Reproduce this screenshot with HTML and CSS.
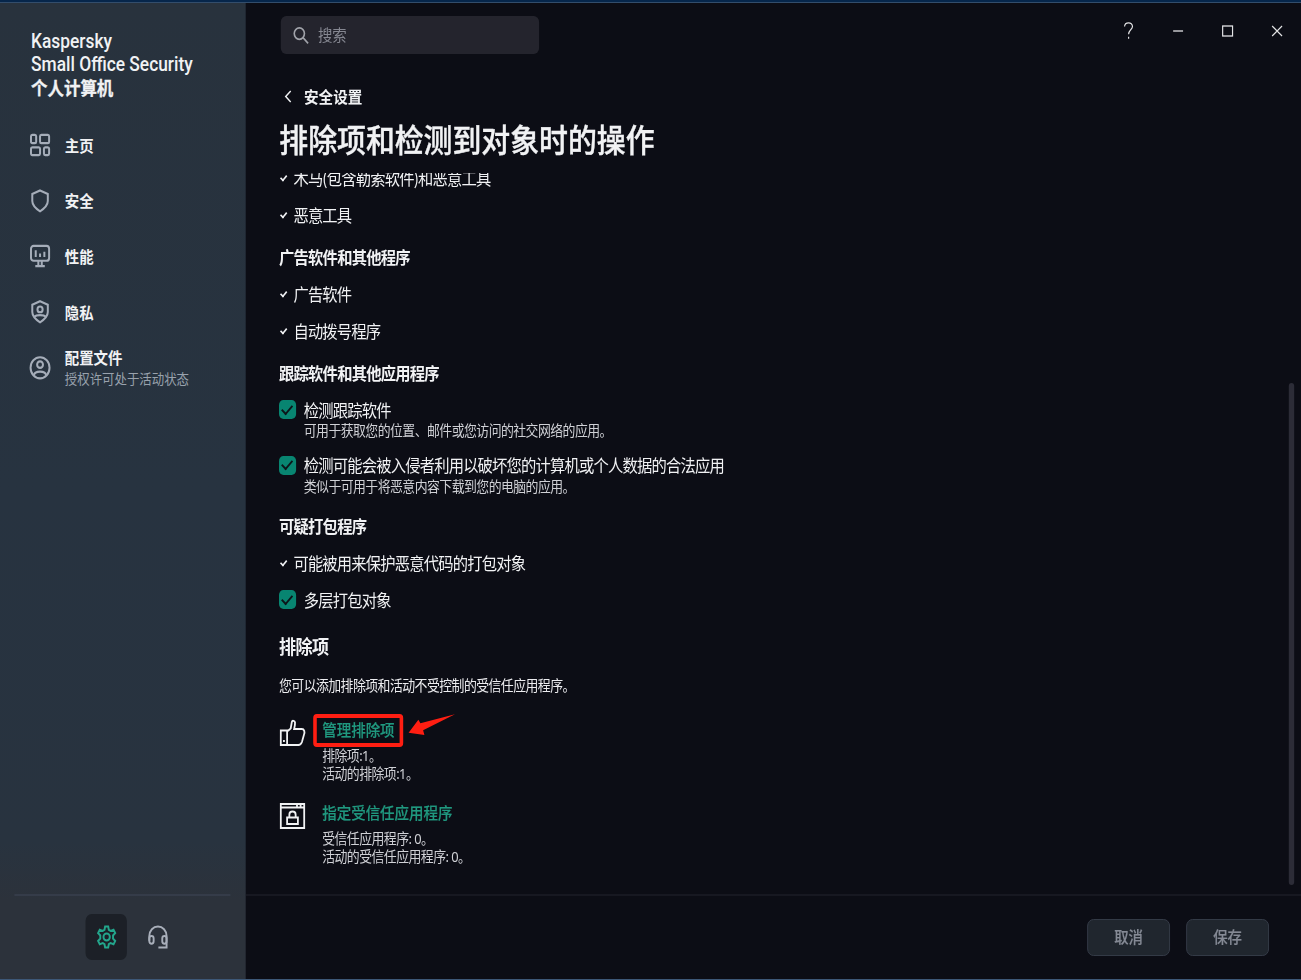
FILE: index.html
```
<!DOCTYPE html>
<html lang="zh-CN">
<head>
  <meta charset="UTF-8" />
  <meta name="viewport" content="width=device-width, initial-scale=1.0"/>
  <title>Kaspersky Small Office Security</title>
  <link rel="stylesheet" href="styles.css">
</head>
<body>

  <div class="screen">
  <div class="window">
    <aside class="sidebar">
      <div class="brand">Kaspersky<br>Small Office Security<br><b>个人计算机</b></div>

      <nav class="nav">
        <a class="nav-item">
          <svg class="nav-icon" viewBox="0 0 24 24"><rect x="1.500" y="2" width="6" height="8.500" rx="1.5"/><rect x="12" y="2" width="10.500" height="8.500" rx="1.5"/><rect x="1.500" y="15" width="10.500" height="8" rx="1.5"/><rect x="16.500" y="15" width="6" height="8" rx="1.5"/></svg>
          <span>主页</span>
        </a>
        <a class="nav-item">
          <svg class="nav-icon" viewBox="0 0 24 24"><path d="M12 1.500l9 3.700v7.300c0 4.200-4 7.800-9 10.800-5-3-9-6.600-9-10.800V5.200z"/></svg>
          <span>安全</span>
        </a>
        <a class="nav-item">
          <svg class="nav-icon" viewBox="0 0 24 24"><rect x="1.500" y="2" width="21" height="15.500" rx="3"/><path d="M7 6.500v7M12 10v3.500M17 8v5.500M10 17v5M14 17v5M6.500 23h11"/></svg>
          <span>性能</span>
        </a>
        <a class="nav-item">
          <svg class="nav-icon" viewBox="0 0 24 24"><path d="M12 1.300l9 3.700v7.500c0 4.200-4 7.800-9 10.800-5-3-9-6.600-9-10.800V5z"/><circle cx="12" cy="9.800" r="3"/><path d="M5.500 17.500c2-2.400 11-2.400 13 0"/></svg>
          <span>隐私</span>
        </a>
        <a class="nav-item">
          <svg class="nav-icon" viewBox="0 0 24 24"><circle cx="12" cy="12.300" r="11"/><circle cx="12" cy="9" r="3.400"/><path d="M5 20c.5-5 13.500-5 14 0"/></svg>
          <span>配置文件<small>授权许可处于活动状态</small></span>
        </a>
      </nav>

      <div class="sidebar-footer">
        <button class="tool active" aria-label="设置">
          <svg viewBox="0 0 24 24"><path d="M10.200 1h3.600l.7 3.500 2 1.200 3.500-1.200 1.900 3.400-2.500 2.500v3.200l2.500 2.500-1.900 3.400-3.500-1.200-2 1.200-.7 3.500h-3.600l-.7-3.500-2-1.200L4 19.500l-1.900-3.400 2.500-2.500v-3.200L2.100 7.900 4 4.500l3.500 1.200 2-1.200z"/><circle cx="12" cy="12" r="3.700"/></svg>
        </button>
        <button class="tool" aria-label="支持">
          <svg viewBox="0 0 24 24"><path d="M2 16v-5a10 10 0 0 1 20 0V23h-9.500"/><rect x="2" y="11" width="5" height="8" rx="2.500"/><rect x="17" y="11" width="5" height="8" rx="2.500"/></svg>
        </button>
      </div>
    </aside>

    <main class="main">
      <header class="topbar">
        <div class="search">
          <svg viewBox="0 0 18 18"><circle cx="7" cy="7" r="6"/><path d="M11.300 11.300l6 6"/></svg>
          <span>搜索</span>
        </div>
        <div class="window-controls">
          <svg viewBox="0 0 18 18"><path d="M4.500 4.500C4.800-.4 13.300-.4 13.300 4.400c0 3.300-4.300 3.600-4.300 7.900M9 14.800v2"/></svg>
          <svg viewBox="0 0 18 18"><path d="M3.500 9h11"/></svg>
          <svg viewBox="0 0 18 18"><rect x="3.500" y="4" width="11" height="10"/></svg>
          <svg viewBox="0 0 18 18"><path d="M3.500 4l11 10M14.500 4l-11 10"/></svg>
        </div>
      </header>

      <a class="back">
        <svg viewBox="0 0 8 12"><path d="M7 1L1.500 6.500l5.500 5.500"/></svg>
        <span>安全设置</span>
      </a>
      <h1>排除项和检测到对象时的操作</h1>

      <section class="content">
        <div class="item first"><i class="tick"></i>木马(包含勒索软件)和恶意工具</div>
        <div class="item"><i class="tick"></i>恶意工具</div>

        <h3>广告软件和其他程序</h3>
        <div class="item"><i class="tick"></i>广告软件</div>
        <div class="item"><i class="tick"></i>自动拨号程序</div>

        <h3>跟踪软件和其他应用程序</h3>
        <div class="item"><i class="checkbox"></i>检测跟踪软件</div>
        <p class="hint">可用于获取您的位置、邮件或您访问的社交网络的应用。</p>
        <div class="item">
          <i class="checkbox"></i>检测可能会被入侵者利用以破坏您的计算机或个人数据的合法应用
        </div>
        <p class="hint">类似于可用于将恶意内容下载到您的电脑的应用。</p>

        <h3>可疑打包程序</h3>
        <div class="item"><i class="tick"></i>可能被用来保护恶意代码的打包对象</div>
        <div class="item"><i class="checkbox"></i>多层打包对象</div>

        <h2>排除项</h2>
        <p class="lead">您可以添加排除项和活动不受控制的受信任应用程序。</p>

        <div class="action">
          <svg class="action-icon" viewBox="0 0 28 26"><path d="M1 10.500h7V25H1zM8 11.500l4-3 1.300-6.800c.5-1.500 3.200-1 3.500.8.200 2-.6 4.800-1 6.500h8.500c3 0 3.500 3 2.500 5.500L24.500 22c-.8 2-2 3-4 3H8"/><path d="M4.500 20v2"/></svg>
          <div>
            <a class="link">管理排除项
              <span class="highlight"></span>
              <svg class="arrow" viewBox="0 0 46 21" preserveAspectRatio="none"><path d="M0 18.700L9.700 5.700l2 3.600L46 .3 14.400 16.300l1.300 4.700z"/></svg>
            </a>
            <p>排除项:1。</p>
            <p>活动的排除项:1。</p>
          </div>
        </div>

        <div class="action">
          <svg class="action-icon" viewBox="0 0 28 26"><path d="M1 1h26v24H1zM1 4.500h26M18 2.700h2M22 2.700h2M8 14.500h12V21H8zM10.500 14.500v-2.800c0-4.200 7-4.200 7 0v2.800"/></svg>
          <div>
            <a class="link">指定受信任应用程序</a>
            <p>受信任应用程序: 0。</p>
            <p>活动的受信任应用程序: 0。</p>
          </div>
        </div>

        <span class="scrollbar"></span>
      </section>

      <footer class="actions">
        <button class="btn">取消</button>
        <button class="btn">保存</button>
      </footer>
    </main>
  </div>
  </div>

</body>
</html>
```
FILE: styles.css
```
* {
  box-sizing: border-box;
}

body {
  margin: 0;
  background: #0c0d15;
  color: #f1f2f4;
  font-family: "Noto Sans CJK SC", sans-serif;
}

.screen {
  width: 100%;
  height: 980px;
  overflow: hidden;
}

/* the interface is drawn in a slightly condensed width */
.window {
  display: flex;
  width: 1445.5px;
  height: 980px;
  border-top: 2px solid #06264b;
  border-bottom: 1px solid #3d5878;
  box-shadow: inset 0 1px #334d6b;
  transform: scaleX(0.9);
  transform-origin: 0 0;
}

svg {
  display: block;
  fill: none;
  stroke: currentColor;
  stroke-width: 2;
  overflow: visible;
}

h1, h2, h3, p {
  margin: 0;
}

button {
  border: 0;
  padding: 0;
  font-family: inherit;
}

/* sidebar */
.sidebar {
  display: flex;
  flex-direction: column;
  flex: none;
  width: 273.3px;
  margin-top: 1px;
  padding: 27px 17px 0 16px;
  background: linear-gradient(#28323d, #273340 50%, #28333f 86%, #2c323b 92%);
}

.brand {
  padding-left: 18.5px;
  font-family: Roboto, "Noto Sans CJK SC", sans-serif;
  font-size: 19.3px;
  font-weight: 500;
  line-height: 23px;
}

.brand b {
  display: inline-block;
  font-size: 18.3px;
  -webkit-text-stroke: 0.3px;
  transform: translateY(1px);
}

.nav {
  margin-top: 18px;
}

.nav-item {
  display: flex;
  align-items: center;
  gap: 16.5px;
  height: 55.6px;
  padding-left: 16.5px;
  font-size: 16px;
  font-weight: 700;
  line-height: 22px;
}

.nav-icon {
  width: 23px;
  height: 23px;
  color: #a5adb9;
  stroke-width: 2.3;
}

.nav-item small {
  display: block;
  color: #99a2ad;
  font-size: 13.8px;
  font-weight: 400;
  line-height: 20px;
}

.sidebar-footer {
  display: flex;
  justify-content: center;
  gap: 11px;
  height: 85px;
  margin-top: auto;
  padding: 18px 0 0 21px;
  border-top: 2px solid #353c49;
}

.tool {
  display: grid;
  place-items: center;
  width: 46px;
  height: 46px;
  border-radius: 7px;
  background: none;
  color: #a9afba;
}

.tool svg {
  width: 23px;
  height: 24px;
  stroke-width: 2.2;
}

.tool.active {
  background: #1c2027;
  color: #23a68c;
}

/* main area */
.main {
  display: flex;
  flex-direction: column;
  flex: 1;
  min-width: 0;
}

.topbar {
  display: flex;
  justify-content: space-between;
  padding: 14px 18px 0 39px;
}

.search {
  display: flex;
  align-items: center;
  gap: 10px;
  width: 286.5px;
  height: 38px;
  padding: 0 0 0 14px;
  border-radius: 6px;
  background: #24242d;
  color: #858791;
  font-size: 16px;
}

.search span {
  margin-top: -2px;
}

.search svg {
  width: 17px;
  height: 17px;
  color: #a1a3aa;
  stroke-width: 1.9;
}

.window-controls {
  display: flex;
  gap: 37px;
  padding-top: 6px;
  color: #e4e4e6;
}

.window-controls svg {
  width: 18px;
  height: 18px;
  stroke-width: 1.3;
}

.back {
  display: flex;
  align-items: center;
  gap: 14px;
  height: 24px;
  margin: 30px 0 0 42.5px;
  font-size: 16.2px;
  font-weight: 700;
}

.back svg {
  width: 8px;
  height: 12px;
  stroke-width: 1.6;
}

h1 {
  height: 48px;
  margin: 6px 0 0 37px;
  font-size: 32.1px;
  font-weight: 500;
  line-height: 48px;
  -webkit-text-stroke: 0.4px;
}

/* scrolled settings list */
.content {
  position: relative;
  height: 721px;
  margin-top: 11px;
  padding-left: 36.7px;
  overflow: hidden;
}

.content h3 {
  margin-top: 18px;
  font-size: 17px;
  font-weight: 700;
  letter-spacing: -0.85px;
  line-height: 24px;
}

.item {
  display: flex;
  align-items: center;
  height: 24px;
  margin-top: 13px;
  padding-bottom: 2px;
  font-size: 17px;
  letter-spacing: -0.9px;
}

.item.first {
  margin-top: -7px;
}

.tick {
  width: 8px;
  height: 4.5px;
  margin: 0 7px 0 1px;
  border: solid #f1f2f4;
  border-width: 0 0 2px 2px;
  transform: rotate(-48deg) scale(0.9);
}

.checkbox {
  display: grid;
  place-items: center;
  width: 19px;
  height: 19px;
  margin: 1px 8.5px 0 0;
  border-radius: 5px;
  background: #088571;
}

.checkbox::before {
  content: "";
  width: 10px;
  height: 5px;
  margin-top: -3px;
  border: solid #0c1519;
  border-width: 0 0 2px 2px;
  transform: rotate(-47deg);
}

.hint,
.lead,
.action p {
  color: #d0d1d6;
  font-family: "Noto Sans", "Noto Sans CJK SC", sans-serif;
  font-size: 14.3px;
  letter-spacing: -0.6px;
  line-height: 18.5px;
}

.hint {
  padding-left: 27.5px;
}

.content h2 {
  margin-top: 22px;
  font-size: 19px;
  font-weight: 700;
  letter-spacing: -0.6px;
  line-height: 24px;
}

.content .lead {
  margin-top: 19px;
  color: #ededf0;
}

.action {
  display: flex;
  gap: 19px;
  margin-top: 21px;
}

.action + .action {
  margin-top: 16px;
}

.action-icon {
  width: 28px;
  height: 26px;
  margin: 3px 0 0 1px;
}

.link {
  position: relative;
  display: inline-block;
  margin-bottom: 6px;
  color: #20987f;
  font-size: 16.1px;
  font-weight: 500;
  line-height: 24px;
  vertical-align: top;
  -webkit-text-stroke: 0.2px;
}

/* red frame and arrow over the exclusions link */
.highlight {
  position: absolute;
  top: -3px;
  left: -10px;
  width: 100px;
  height: 33px;
  border: 4px solid #ff1e12;
  border-radius: 4px;
}

.arrow {
  position: absolute;
  top: -3px;
  left: 96px;
  width: 51.5px;
  height: 21px;
  fill: #ff1e12;
  stroke: none;
}

.scrollbar {
  position: absolute;
  top: 210px;
  right: 8px;
  width: 5.5px;
  height: 502px;
  border-radius: 3px;
  background: #2c2c37;
}

/* bottom buttons */
.actions {
  display: flex;
  justify-content: flex-end;
  align-items: flex-start;
  gap: 18px;
  flex: 1;
  padding: 23px 35.5px 0 0;
  border-top: 2px solid #171821;
}

.btn {
  width: 92px;
  height: 37px;
  padding-bottom: 3px;
  border: 1px solid #363c49;
  border-radius: 7px;
  background: #20262e;
  color: #858a95;
  font-size: 16px;
  font-weight: 500;
  -webkit-text-stroke: 0.2px;
}
```
